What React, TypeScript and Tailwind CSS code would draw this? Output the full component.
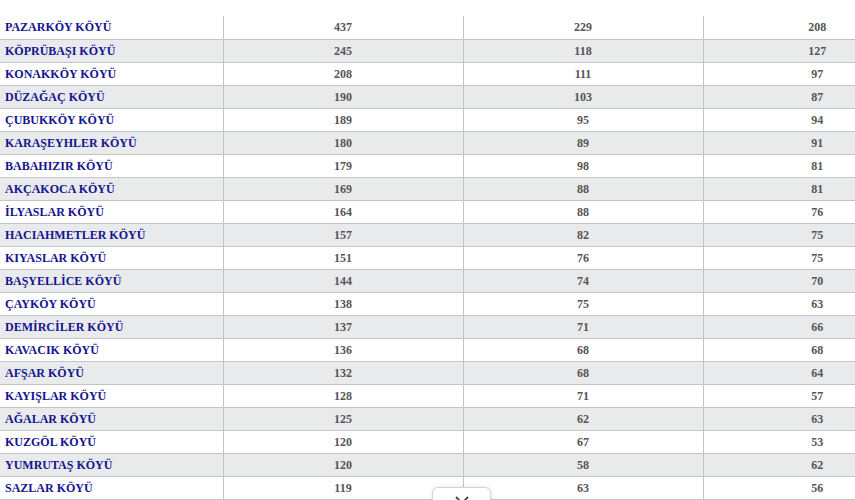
import React from "react";

const rows: [string, number, number, number][] = [
  ["PAZARKÖY KÖYÜ", 437, 229, 208],
  ["KÖPRÜBAŞI KÖYÜ", 245, 118, 127],
  ["KONAKKÖY KÖYÜ", 208, 111, 97],
  ["DÜZAĞAÇ KÖYÜ", 190, 103, 87],
  ["ÇUBUKKÖY KÖYÜ", 189, 95, 94],
  ["KARAŞEYHLER KÖYÜ", 180, 89, 91],
  ["BABAHIZIR KÖYÜ", 179, 98, 81],
  ["AKÇAKOCA KÖYÜ", 169, 88, 81],
  ["İLYASLAR KÖYÜ", 164, 88, 76],
  ["HACIAHMETLER KÖYÜ", 157, 82, 75],
  ["KIYASLAR KÖYÜ", 151, 76, 75],
  ["BAŞYELLİCE KÖYÜ", 144, 74, 70],
  ["ÇAYKÖY KÖYÜ", 138, 75, 63],
  ["DEMİRCİLER KÖYÜ", 137, 71, 66],
  ["KAVACIK KÖYÜ", 136, 68, 68],
  ["AFŞAR KÖYÜ", 132, 68, 64],
  ["KAYIŞLAR KÖYÜ", 128, 71, 57],
  ["AĞALAR KÖYÜ", 125, 62, 63],
  ["KUZGÖL KÖYÜ", 120, 67, 53],
  ["YUMRUTAŞ KÖYÜ", 120, 58, 62],
  ["SAZLAR KÖYÜ", 119, 63, 56],
];

export default function App() {
  return (
    <div className="relative w-[855px] h-[500px] overflow-hidden bg-white font-[family-name:Liberation_Serif,Times_New_Roman,serif]">
      <div className="h-[16px]" />
      <table className="table-fixed border-collapse w-[931px] text-[12px] font-bold font-[family-name:Liberation_Serif,Times_New_Roman,serif]">
        <colgroup>
          <col className="w-[223px]" />
          <col className="w-[240px]" />
          <col className="w-[240px]" />
          <col className="w-[228px]" />
        </colgroup>
        <tbody>
          {rows.map((r, i) => (
            <tr
              key={r[0]}
              className={`h-[23px] border-b border-[#c4c4c4] ${i % 2 === 1 ? "bg-[#e9eaec]" : "bg-white"}`}
            >
              <td className="px-[5px] p-0 border-r border-[#c4c4c4] text-[#14148f] whitespace-nowrap leading-none">
                {r[0]}
              </td>
              <td className="p-0 border-r border-[#c4c4c4] text-center text-[#555555] leading-none">{r[1]}</td>
              <td className="p-0 border-r border-[#c4c4c4] text-center text-[#555555] leading-none">{r[2]}</td>
              <td className="p-0 text-center text-[#555555] leading-none">{r[3]}</td>
            </tr>
          ))}
        </tbody>
      </table>
      <div className="absolute left-[432px] top-[487px] w-[59px] h-[20px] rounded-t-[6px] bg-white border border-[#d4d4d4] shadow-[0_0_4px_rgba(0,0,0,0.12)] flex justify-center pt-[8px]">
        <svg width="14" height="8" viewBox="0 0 14 8" fill="none">
          <path d="M1 1l6 6 6-6" stroke="#444" strokeWidth="1.8" />
        </svg>
      </div>
    </div>
  );
}
